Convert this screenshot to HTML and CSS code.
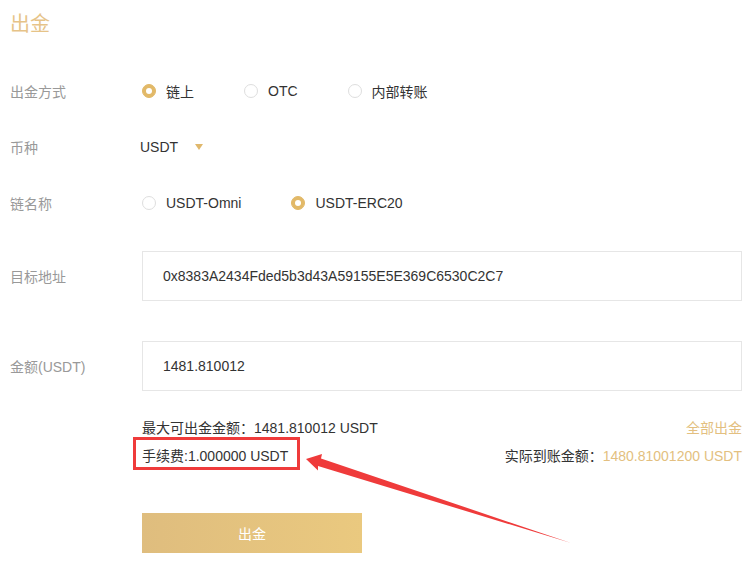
FILE: index.html
```html
<!DOCTYPE html>
<html lang="zh">
<head>
    <meta charset="UTF-8">
    <title>出金</title>
    <link rel="stylesheet" href="styles.css">
</head>
<body>
<div class="page">
    <h1 class="page-title">出金</h1>

    <div class="form-row">
        <div class="form-label">出金方式</div>
        <div class="radio-group">
            <label class="radio-item"><span class="radio checked"></span>链上</label>
            <label class="radio-item"><span class="radio"></span>OTC</label>
            <label class="radio-item"><span class="radio"></span>内部转账</label>
        </div>
    </div>

    <div class="form-row">
        <div class="form-label">币种</div>
        <div class="coin-select">USDT<span class="caret"></span></div>
    </div>

    <div class="form-row">
        <div class="form-label">链名称</div>
        <div class="radio-group">
            <label class="radio-item"><span class="radio"></span>USDT-Omni</label>
            <label class="radio-item"><span class="radio checked"></span>USDT-ERC20</label>
        </div>
    </div>

    <div class="form-row input-row first">
        <div class="form-label">目标地址</div>
        <div class="text-input">0x8383A2434Fded5b3d43A59155E5E369C6530C2C7</div>
    </div>

    <div class="form-row input-row">
        <div class="form-label">金额(USDT)</div>
        <div class="text-input">1481.810012</div>
    </div>

    <div class="info">
        <div class="info-line">
            <span>最大可出金金额：1481.810012 USDT</span>
            <span class="gold">全部出金</span>
        </div>
        <div class="info-line">
            <span>手续费:1.000000 USDT</span>
            <span>实际到账金额：<span class="gold">1480.81001200 USDT</span></span>
        </div>
    </div>

    <button class="submit-btn">出金</button>

    <!-- anotación roja -->
    <div class="mark-box"></div>
    <svg class="mark-arrow" width="753" height="564" viewBox="0 0 753 564">
        <polygon points="306,459 322,454 321,458.5 571,543 318,466 318,470.5" fill="#ef3b3b"/>
    </svg>
</div>
</body>
</html>
```

FILE: styles.css
```css
body {
    margin: 0;
    background: #fff;
    font-family: "Liberation Sans", Arial, "Noto Sans CJK SC", sans-serif;
    color: #333;
    font-size: 14px;
}

.page {
    position: relative;
    width: 753px;
    height: 564px;
    overflow: hidden;
}

/* Título */
.page-title {
    margin: 0 0 15px 0;
    padding-left: 10px;
    font-size: 20px;
    font-weight: normal;
    line-height: 48px;
    color: #e6c388;
}

/* Filas del formulario */
.form-row {
    display: flex;
    align-items: center;
    height: 56px;
}

.form-label {
    width: 142px;
    padding-left: 10px;
    box-sizing: border-box;
    color: #999;
    flex-shrink: 0;
}

.radio-group {
    display: flex;
    align-items: center;
}

.radio-item {
    display: flex;
    align-items: center;
    margin-right: 50px;
    color: #333;
}

.radio {
    position: relative;
    width: 14px;
    height: 14px;
    margin-right: 10px;
    border: 1px solid #dedede;
    border-radius: 50%;
    box-sizing: border-box;
    background: #fff;
}

.radio.checked {
    background: #e2b968;
    border-color: #e2b968;
}

.radio.checked::after {
    content: "";
    position: absolute;
    top: 50%;
    left: 50%;
    width: 6px;
    height: 6px;
    margin: -3px 0 0 -3px;
    border-radius: 50%;
    background: #fff;
}

/* Selector de moneda */
.coin-select {
    display: flex;
    align-items: center;
    margin-left: -2px;
}

.caret {
    width: 0;
    height: 0;
    margin-left: 17px;
    border-left: 4px solid transparent;
    border-right: 4px solid transparent;
    border-top: 6px solid #e0b86c;
}

/* Campos de texto */
.input-row {
    height: 50px;
    margin-top: 40px;
}

.input-row.first {
    margin-top: 20px;
}

.text-input {
    width: 600px;
    height: 50px;
    padding-left: 20px;
    box-sizing: border-box;
    border: 1px solid #e6e6e6;
    line-height: 48px;
    color: #333;
}

/* Información */
.info {
    width: 600px;
    margin: 23px 0 0 142px;
}

.info-line {
    display: flex;
    justify-content: space-between;
    line-height: 28px;
}

.gold {
    color: #e3bf80;
}

/* Botón */
.submit-btn {
    display: block;
    width: 220px;
    height: 40px;
    margin: 43px 0 0 142px;
    border: none;
    background: linear-gradient(to right, #dfbd7e, #eac97f);
    color: #fff;
    font-family: inherit;
    font-size: 14px;
    cursor: pointer;
}

/* Marcas de anotación */
.mark-box {
    position: absolute;
    left: 133px;
    top: 437px;
    width: 167px;
    height: 33px;
    border: 3px solid #ef3b3b;
    box-sizing: border-box;
}

.mark-arrow {
    position: absolute;
    left: 0;
    top: 0;
    pointer-events: none;
}
```
